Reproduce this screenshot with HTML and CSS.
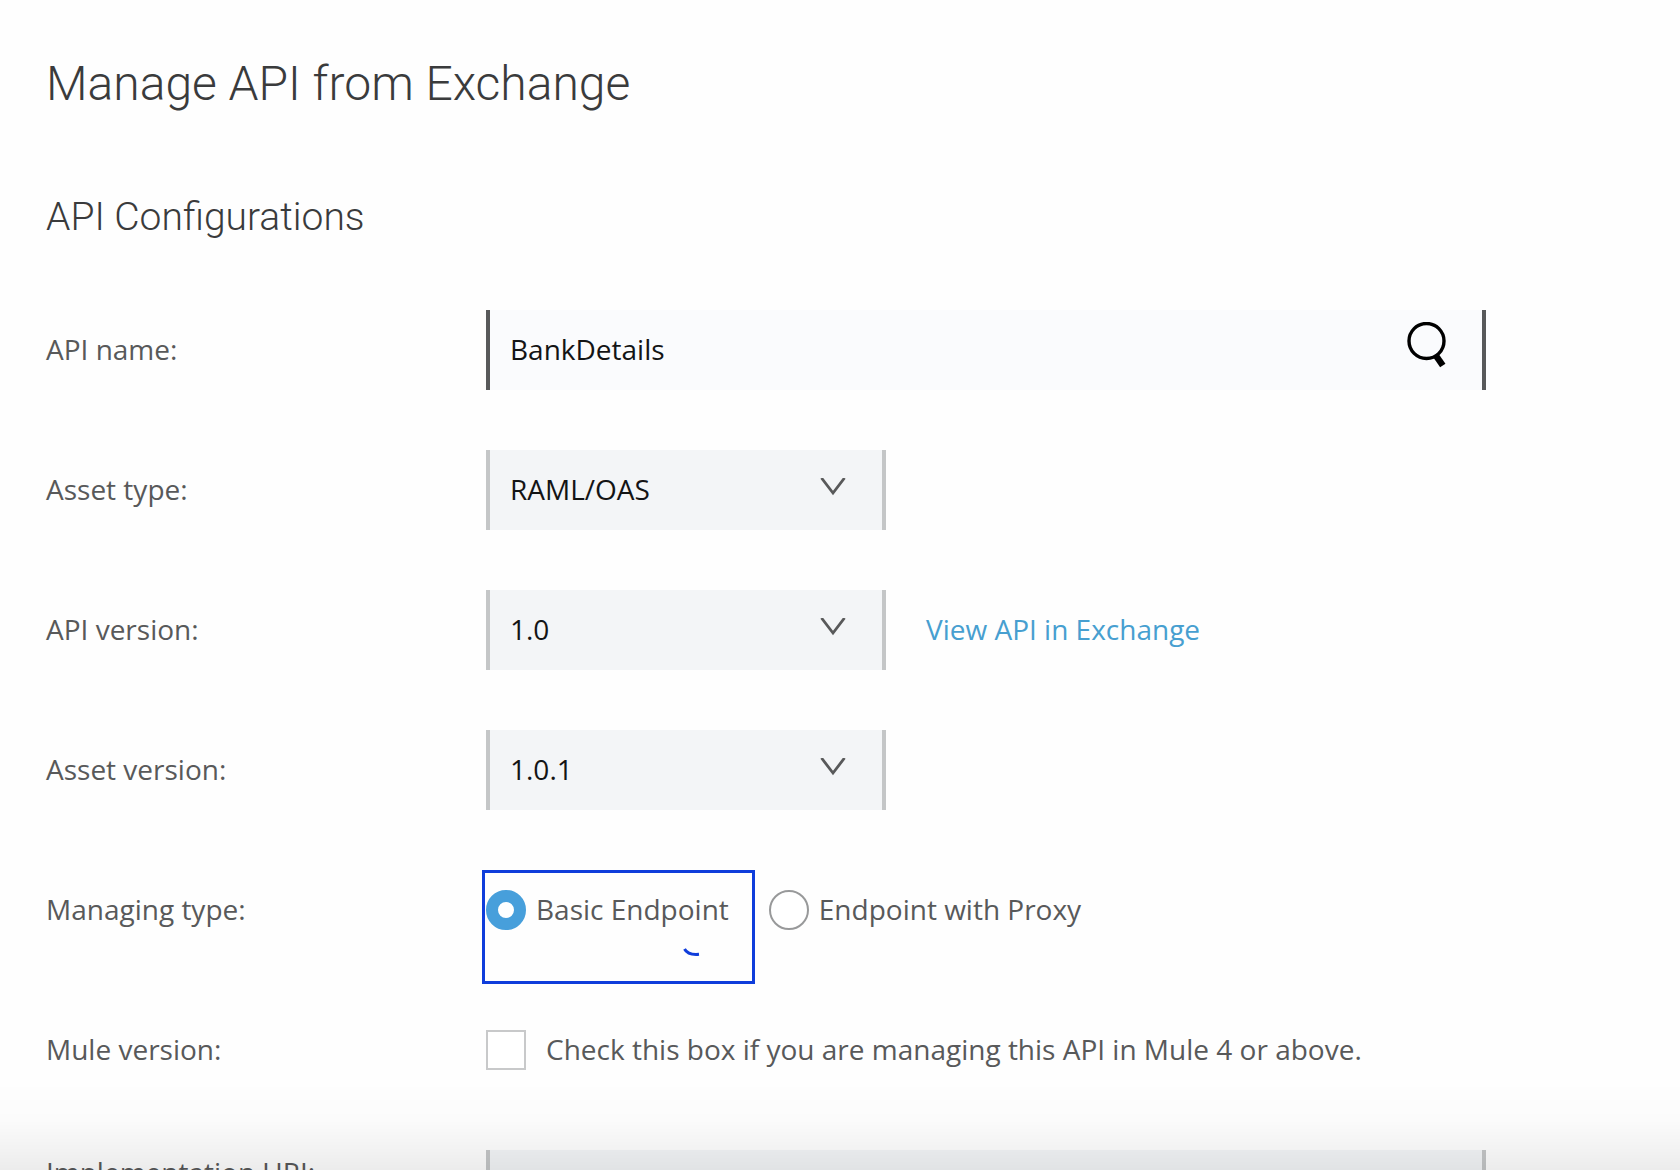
FILE: index.html
```html
<!DOCTYPE html>
<html lang="en">
<head>
    <meta charset="UTF-8">
    <meta name="viewport" content="width=device-width, initial-scale=1.0">
    <title>Manage API from Exchange</title>
    <link rel="stylesheet" href="styles.css">
</head>
<body>
    <main class="page">
        <h1>Manage API from Exchange</h1>
        <h2>API Configurations</h2>

        <form class="api-form">
            <div class="row">
                <label class="row-label" for="apiName">API name:</label>
                <div class="search-field">
                    <input class="field" type="text" id="apiName" value="BankDetails">
                    <button class="search-btn" type="button" aria-label="Search">
                        <svg width="42" height="46" viewBox="0 0 42 46">
                            <circle cx="22.5" cy="19" r="17.5" fill="none" stroke="#000" stroke-width="3.4"/>
                            <path d="M31.5 33 L38.8 43.5" fill="none" stroke="#000" stroke-width="6.5"/>
                        </svg>
                    </button>
                </div>
            </div>

            <div class="row">
                <label class="row-label" for="assetType">Asset type:</label>
                <div class="select-field">
                    <select class="field" id="assetType">
                        <option>RAML/OAS</option>
                    </select>
                    <svg class="chevron" width="26" height="18" viewBox="0 0 26 18">
                        <path d="M1.5 0 L13 15 L24.5 0" fill="none" stroke="#58595a" stroke-width="2.8"/>
                    </svg>
                </div>
            </div>

            <div class="row">
                <label class="row-label" for="apiVersion">API version:</label>
                <div class="select-field">
                    <select class="field" id="apiVersion">
                        <option>1.0</option>
                    </select>
                    <svg class="chevron" width="26" height="18" viewBox="0 0 26 18">
                        <path d="M1.5 0 L13 15 L24.5 0" fill="none" stroke="#58595a" stroke-width="2.8"/>
                    </svg>
                </div>
                <a class="view-link" href="#">View API in Exchange</a>
            </div>

            <div class="row">
                <label class="row-label" for="assetVersion">Asset version:</label>
                <div class="select-field">
                    <select class="field" id="assetVersion">
                        <option>1.0.1</option>
                    </select>
                    <svg class="chevron" width="26" height="18" viewBox="0 0 26 18">
                        <path d="M1.5 0 L13 15 L24.5 0" fill="none" stroke="#58595a" stroke-width="2.8"/>
                    </svg>
                </div>
            </div>

            <div class="row" role="radiogroup" aria-labelledby="managingType">
                <span class="row-label" id="managingType">Managing type:</span>
                <div class="radios">
                    <div class="marked">
                        <label class="option"><input class="radio" type="radio" name="managing" checked><span class="option-text">Basic Endpoint</span></label>
                        <div class="mark">
                            <svg class="mark-stroke" width="18" height="10" viewBox="0 0 18 10">
                                <path d="M1.5 2 C4 6.5 9 8 16 7.3" fill="none" stroke="#0f3ddb" stroke-width="3"/>
                            </svg>
                        </div>
                    </div>
                    <label class="option"><input class="radio" type="radio" name="managing"><span class="option-text">Endpoint with Proxy</span></label>
                </div>
            </div>

            <div class="row">
                <span class="row-label">Mule version:</span>
                <label class="option option-check"><input class="checkbox" type="checkbox"><span class="option-text">Check this box if you are managing this API in Mule 4 or above.</span></label>
            </div>

            <div class="row row-top">
                <label class="row-label" for="implUri">Implementation URI:</label>
                <input class="field" type="text" id="implUri">
            </div>
        </form>
    </main>
    <div class="bottom-shade"></div>
</body>
</html>
```

FILE: styles.css
```css
* {
    box-sizing: border-box;
}
body {
    margin: 0;
    height: 100vh;
    overflow: hidden;
    background-color: #fefefe;
    color: #58595a;
    font-family: "Open Sans", "Noto Sans", sans-serif;
    font-size: 28px;
    line-height: 40px;
}
.page {
    padding: 52px 46px 0;
}
h1,
h2 {
    margin: 0;
    color: #3a3b3c;
    font-family: Roboto, "Open Sans", sans-serif;
    font-weight: 300;
}
h1 {
    font-size: 48px;
    line-height: 64px;
}
h2 {
    margin-top: 76px;
    font-size: 39px;
    line-height: 50px;
}
.api-form {
    display: flex;
    flex-direction: column;
    gap: 60px;
    margin-top: 68px;
}
.row {
    display: flex;
    align-items: center;
    height: 80px;
}
.row-label {
    flex: 0 0 440px;
}
.row-label,
.option-text,
.view-link {
    padding-bottom: 2px;
}
.row-top {
    align-items: flex-start;
}
.row-top .row-label {
    padding-top: 2px;
}
.field {
    width: 100%;
    max-width: 1000px;
    height: 80px;
    padding: 0 20px 2px;
    border: solid #c4c6c7;
    border-width: 0 4px;
    border-radius: 0;
    background-color: #f3f5f7;
    color: #131415;
    font: inherit;
    appearance: none;
}
.search-field {
    position: relative;
    flex: 1;
    max-width: 1000px;
}
.search-field .field {
    padding-right: 90px;
    border-color: #58595a;
    background-color: #fafbfd;
}
.search-btn {
    position: absolute;
    top: 12px;
    right: 40px;
    padding: 0;
    border: none;
    background: none;
    line-height: 0;
    cursor: pointer;
}
.select-field {
    position: relative;
    flex: 0 1 400px;
}
.chevron {
    position: absolute;
    top: 28px;
    right: 40px;
    pointer-events: none;
}
.view-link {
    margin-left: 40px;
    color: #479fd0;
    text-decoration: none;
}
.radios {
    display: flex;
    gap: 40px;
}
.option {
    display: flex;
    align-items: center;
    gap: 10px;
}
.option-check {
    gap: 20px;
}
.radio,
.checkbox {
    flex: none;
    width: 40px;
    height: 40px;
    margin: 0;
    border: 2px solid #98999a;
    background-color: #fff;
    appearance: none;
}
.radio {
    border-radius: 50%;
}
.radio:checked {
    border: 12px solid #479fdb;
}
.checkbox {
    border-color: #c8c9ca;
}
/* hand-drawn highlight over the first option */
.marked {
    position: relative;
}
.mark {
    position: absolute;
    top: -19px;
    left: -4px;
    right: -26px;
    height: 114px;
    border: 3px solid #0f3ddb;
    pointer-events: none;
}
.mark-stroke {
    position: absolute;
    right: 51px;
    bottom: 24px;
}
.bottom-shade {
    position: fixed;
    left: 0;
    right: 0;
    bottom: 0;
    height: 90px;
    background: linear-gradient(rgba(0, 0, 0, 0), rgba(0, 0, 0, 0.01) 45%, rgba(0, 0, 0, 0.07));
    pointer-events: none;
}
```
